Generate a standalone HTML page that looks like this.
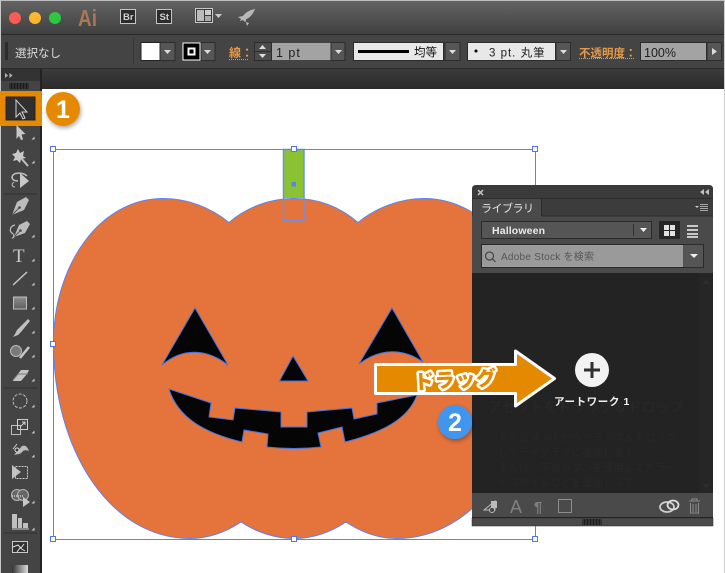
<!DOCTYPE html>
<html lang="ja"><head><meta charset="utf-8"><title>Illustrator</title>
<style>
html,body{margin:0;padding:0;background:#fff}
svg{display:block;position:absolute;left:0;top:0}
text{font-family:"Liberation Sans","Noto Sans CJK JP",sans-serif}
</style></head><body>
<svg width="725" height="573" viewBox="0 0 725 573" xmlns="http://www.w3.org/2000/svg">
<defs>
<linearGradient id="tb" x1="0" y1="0" x2="0" y2="1"><stop offset="0" stop-color="#636363"/><stop offset="1" stop-color="#404040"/></linearGradient>
<linearGradient id="db" x1="0" y1="0" x2="0" y2="1"><stop offset="0" stop-color="#3b3b3b"/><stop offset="1" stop-color="#2b2b2b"/></linearGradient>
<linearGradient id="ic" x1="0" y1="0" x2="0" y2="1"><stop offset="0" stop-color="#8e8e8e"/><stop offset="1" stop-color="#5f5f5f"/></linearGradient>
<linearGradient id="grd" x1="0" y1="0" x2="1" y2="0"><stop offset="0" stop-color="#333"/><stop offset="1" stop-color="#ddd"/></linearGradient>
<filter id="sh" x="-30%" y="-30%" width="170%" height="170%"><feDropShadow dx="1" dy="2" stdDeviation="2" flood-color="#000" flood-opacity=".35"/></filter>
</defs>
<rect width="725" height="573" fill="#fff"/>
<!-- title bar -->
<rect x="1" y="1" width="723" height="33" fill="url(#tb)"/>
<rect x="0" y="0" width="725" height="1" fill="#bdbdbd"/>
<rect x="0" y="0" width="1" height="573" fill="#c8c8c8"/>
<rect x="724" y="0" width="1" height="573" fill="#d0d0d0"/>
<circle cx="15" cy="18" r="6" fill="#f95c57"/><circle cx="35" cy="18" r="6" fill="#fdb62f"/><circle cx="55" cy="18" r="6" fill="#2bc840"/>
<text x="78" y="26" font-size="23" font-weight="700" fill="#a97856" textLength="19" lengthAdjust="spacingAndGlyphs">Ai</text>
<rect x="120.500" y="9.500" width="15" height="14" fill="#2c2c2c" stroke="#c4c4c4"/>
<text x="123" y="20" font-size="9.500" font-weight="700" fill="#d0d0d0">Br</text>
<rect x="156.500" y="9.500" width="15" height="14" fill="#2c2c2c" stroke="#c4c4c4"/>
<text x="159.500" y="20" font-size="9.500" font-weight="700" fill="#d0d0d0">St</text>
<rect x="195.500" y="8.500" width="17" height="14" fill="#3a3a3a" stroke="#c8c8c8"/>
<rect x="197" y="10" width="7" height="11" fill="#bbb"/><rect x="205" y="10" width="6" height="5" fill="#ccc"/><rect x="205" y="16" width="6" height="5" fill="#aaa"/>
<path d="M215 14h7l-3.500 4z" fill="#c8c8c8"/>
<path d="M255 9c-6 1-10 4-12 7l-5 1 3 2-1 2 3-1 2 2c1 0 1-2 1-3 3 0 7-5 9-10z M246 22l1 4 2-3z" fill="#b8b8b8"/>
<!-- control bar -->
<rect x="1" y="34" width="723" height="1" fill="#2a2a2a"/>
<rect x="1" y="35" width="723" height="33" fill="#444"/>
<rect x="1" y="68" width="723" height="1" fill="#2a2a2a"/>
<path d="M5 43h3M5 45h3M5 47h3M5 49h3M5 51h3M5 53h3M5 55h3M5 57h3M5 59h3" stroke="#151515"/>
<text x="15" y="57" font-size="11.500" fill="#dcdcdc">選択なし</text>
<rect x="133" y="38" width="1" height="26" fill="#363636"/>
<rect x="141" y="42.500" width="19" height="18" fill="#fff" stroke="#222"/>
<rect x="160" y="42.500" width="15" height="18" fill="#565656" stroke="#2c2c2c"/>
<path d="M164 50h7l-3.500 4z" fill="#ddd"/>
<rect x="183" y="43" width="17" height="17" fill="#000" stroke="#fff"/>
<rect x="188.500" y="48.500" width="6" height="6" fill="none" stroke="#fff" stroke-width="2"/>
<rect x="201" y="42.500" width="14" height="18" fill="#565656" stroke="#2c2c2c"/>
<path d="M204 50h7l-3.500 4z" fill="#ddd"/>
<text x="229" y="57" font-size="12" font-weight="700" fill="#e59a48">線：</text>
<path d="M229 59.500h19" stroke="#e59a48" stroke-dasharray="1 1"/>
<rect x="254.500" y="42.500" width="17" height="18" fill="#4c4c4c" stroke="#2c2c2c"/>
<path d="M254 51.500h17" stroke="#2c2c2c"/>
<path d="M259 49l3.500-4 3.500 4z M259 54h7l-3.500 4z" fill="#ddd"/>
<rect x="272" y="43" width="59" height="17" fill="#a3a3a3"/>
<text x="276" y="57" font-size="12.500" fill="#1f1f1f" letter-spacing="1">1 pt</text>
<rect x="331" y="42.500" width="14" height="18" fill="#565656" stroke="#2c2c2c"/>
<path d="M335 50h7l-3.500 4z" fill="#ddd"/>
<rect x="353.500" y="42.500" width="90" height="18" fill="#e8e8e8" stroke="#2c2c2c"/>
<rect x="358" y="50" width="51" height="3" fill="#000"/>
<text x="414" y="56" font-size="11.500" fill="#111">均等</text>
<rect x="445" y="42.500" width="15" height="18" fill="#565656" stroke="#2c2c2c"/>
<path d="M449 50h7l-3.500 4z" fill="#ddd"/>
<rect x="467.500" y="42.500" width="88" height="18" fill="#e8e8e8" stroke="#2c2c2c"/>
<circle cx="476" cy="51" r="1.500" fill="#000"/>
<text x="489" y="56.500" font-size="11.500" fill="#222" letter-spacing="1">3 pt. 丸筆</text>
<rect x="556" y="42.500" width="14.500" height="18" fill="#565656" stroke="#2c2c2c"/>
<path d="M560 50h7l-3.500 4z" fill="#ddd"/>
<text x="579" y="57" font-size="11.500" font-weight="700" fill="#e59a48">不透明度：</text>
<path d="M579 58.500h55" stroke="#e59a48" stroke-dasharray="1 1"/>
<rect x="640.500" y="42.500" width="66" height="18" fill="#a3a3a3" stroke="#2c2c2c"/>
<text x="644" y="57" font-size="12.500" fill="#1f1f1f">100%</text>
<rect x="707" y="42.500" width="14.500" height="18" fill="#565656" stroke="#2c2c2c"/>
<path d="M712 48v7l5-3.500z" fill="#ddd"/>
<!-- dark bar -->
<rect x="42" y="69" width="682" height="20" fill="url(#db)"/>
<!-- toolbar -->
<rect x="1" y="69" width="39" height="504" fill="#444"/>
<rect x="1" y="69" width="39" height="12" fill="#333"/>
<rect x="40" y="69" width="2" height="504" fill="#222"/>
<path d="M5 73v5l3-2.500z M9.500 73v5l3-2.500z" fill="#b5b5b5"/>
<path d="M10 83v6M11.500 83v6M13 83v6M14.500 83v6M16 83v6M17.500 83v6M19 83v6M20.500 83v6M22 83v6M23.500 83v6M25 83v6M26.500 83v6M28 83v6" stroke="#111" stroke-width=".8"/>
<path d="M4 194h33M4 388h33M4 533h33" stroke="#2f2f2f"/>
<!-- artboard -->
<path d="M229 222.500C210 207 187 198.500 163 198.500C100 198.500 53.500 265 53.500 343C53.500 450 110 538.500 190 538.500C209 538.500 226 532 241 522C256 532 275 538.500 294 538.500C313 538.500 331 532 346 522C361 532 378 538.500 397 538.500C477 538.500 535.500 450 535.500 343C535.500 265 488 198.500 424 198.500C401 198.500 377 207 358 222.500C340 207 318 198.500 294 198.500C270 198.500 247 207 229 222.500Z" fill="#e4743c" stroke="#5b82f0"/>
<rect x="283" y="149" width="21" height="49" fill="#8ac234"/>
<rect x="283.500" y="149.500" width="20.500" height="71" fill="none" stroke="#6f8fe6" stroke-width="1.500"/>
<rect x="291.500" y="182" width="4.500" height="4.500" fill="#5b82f0"/>
<path d="M195 308L228 365C206 348 182 348 162 365Z M392 308L423 362C403 348 380 348 359 364Z M293 356L308 381H279.500Z" fill="#050505" stroke="#3f74e8"/>
<path d="M169 389L211 403L209 417L233 420L235 408L281 412L281 427L307 427L307 412L352 408L354 419L377 414L377 403L417 395C408 420 380 433 345 442L342 427L318 433L321 447C303 449 285 449 267 447L268 434L244 430L242 442C205 433 178 418 169 389Z" fill="#050505" stroke="#3f74e8"/>
<rect x="53.500" y="149.500" width="482" height="390" fill="none" stroke="#5b82f0"/>
<g fill="#fff" stroke="#4f78ee"><rect x="50.500" y="146.500" width="5" height="5"/><rect x="291.500" y="146.500" width="5" height="5"/><rect x="532.500" y="146.500" width="5" height="5"/><rect x="50.500" y="341.500" width="5" height="5"/><rect x="50.500" y="536.500" width="5" height="5"/><rect x="291.500" y="536.500" width="5" height="5"/><rect x="532.500" y="536.500" width="5" height="5"/></g>
<!-- tools -->
<rect x="0" y="91" width="42" height="35" fill="#e58a00"/>
<rect x="6" y="97" width="29" height="23" fill="#2f2f2f" stroke="#222"/>
<path d="M16 100v17l4-4 3 6 2-1-3-6h5z" fill="#333" stroke="#d0d0d0"/>
<path d="M16.500 125l9 9-4 .5 1.500 5-2 .5-2-4-2.500 3z" fill="#c8c8c8"/>
<path d="M31.500 139.500h3v-3z M31.500 163.500h3v-3z M31.500 237.500h3v-3z M31.500 261.500h3v-3z M31.500 285.500h3v-3z M31.500 309.500h3v-3z M31.500 333.500h3v-3z M31.500 357.500h3v-3z M31.500 381.500h3v-3z M31.500 407.500h3v-3z M31.500 433.500h3v-3z M31.500 457.500h3v-3z M31.500 503.500h3v-3z M31.500 530.500h3v-3z" fill="#ccc"/>
<path d="M18 149l2 4 4-2-1 5 3 2-5 1-1 4-3-3-4 1 2-4-3-3 4-1z" fill="#c8c8c8"/>
<path d="M21 158l7 8" stroke="#c0c0c0" stroke-width="2"/>
<path d="M27 176c-4-4-14-4-15 1 0 3 3 4 6 4" fill="none" stroke="#c0c0c0" stroke-width="1.500"/>
<path d="M14 182c-3 2-2 5 1 5" fill="none" stroke="#c0c0c0"/>
<path d="M20 173l9 8-9 7z" fill="#c8c8c8"/>
<path d="M29 200l-3-3-9 5-5 13 12-5z" fill="#bcbcbc"/><path d="M12 215l7-7" stroke="#555"/><circle cx="19.500" cy="207.500" r="1.300" fill="#444"/>
<path d="M30 224l-3-3-8 4-5 12 11-4z" fill="#bcbcbc"/><path d="M14 237l6-6" stroke="#555"/><circle cx="20.500" cy="230.500" r="1.300" fill="#444"/>
<path d="M15 225c-5 1-6 6-3 8 3 2 2 5 0 5" fill="none" stroke="#bcbcbc" stroke-width="1.200"/>
<text x="13" y="262" font-family="Liberation Serif" font-size="19" fill="#c8c8c8" style="font-family:'Liberation Serif',serif">T</text>
<path d="M13 285l14-13" stroke="#c8c8c8" stroke-width="1.500"/>
<rect x="13.500" y="297" width="13" height="12" fill="url(#ic)" stroke="#c0c0c0"/>
<path d="M28 319l-11 11-2 4-2 3 5-2 3-3 9-11z" fill="#c0c0c0"/>
<circle cx="16" cy="351" r="5.500" fill="#7a7a7a" stroke="#bbb"/><path d="M20 358l9-11" stroke="#c8c8c8" stroke-width="2.500"/>
<path d="M13 380l8-10 8 0-2 4-6 7-8 0z" fill="#c4c4c4"/><path d="M13 380l5-6h10" fill="none" stroke="#777"/>
<circle cx="20" cy="401" r="7" fill="none" stroke="#bdbdbd" stroke-dasharray="3 1.500"/>
<rect x="11.500" y="425.500" width="9" height="9" fill="none" stroke="#bdbdbd"/><rect x="17.500" y="419.500" width="10" height="10" fill="none" stroke="#d0d0d0"/><path d="M20 427l5-5M22 422h3v3" stroke="#d0d0d0" fill="none"/>
<path d="M14 455l8-9c3-1 5 0 7 5-3-1-4-1-6 0-2 3-4 3-9 4z" fill="#bcbcbc"/><path d="M13 449l4-5" stroke="#ccc"/><circle cx="17" cy="450" r="2" fill="#333" stroke="#ddd"/>
<path d="M12 465l9 7-9 7z" fill="#c0c0c0"/><rect x="15.500" y="466.500" width="12" height="12" fill="none" stroke="#ccc" stroke-dasharray="2 1"/>
<circle cx="17" cy="495" r="5.500" fill="#666" stroke="#b5b5b5"/><circle cx="23" cy="495" r="5.500" fill="#666" stroke="#b5b5b5"/><path d="M12 496h11" stroke="#fff" stroke-dasharray="1 1"/><path d="M23 497l7 5-7 5z" fill="#c8c8c8"/>
<path d="M12 514h5v14h-5z M18 518h4v10h-4z M23 523h5v5h-5z" fill="#c0c0c0"/><path d="M12 529h17" stroke="#ccc"/>
<rect x="12.500" y="541.500" width="15" height="11" fill="#333" stroke="#c8c8c8"/><path d="M13 547l5-2 3 3 3-4M17 552l3-4 5 3" stroke="#ddd" fill="none"/>
<rect x="12" y="565" width="16" height="8" fill="url(#grd)"/>
<!-- badge 1 -->
<circle cx="63" cy="109" r="17" fill="#e58a00" filter="url(#sh)"/>
<text x="63" y="118" font-size="25" font-weight="700" fill="#fff" text-anchor="middle">1</text>
<!-- panel -->
<path d="M472 189q0-4 4-4h233q4 0 4 4v337h-241z" fill="#3b3b3b"/>
<rect x="472" y="198" width="241" height="75" fill="#4a4a4a"/>
<rect x="472" y="198" width="241" height="1" fill="#2d2d2d"/>
<rect x="472" y="199" width="241" height="17" fill="#3c3c3c"/>
<rect x="473" y="199" width="69" height="17" fill="#4a4a4a"/>
<path d="M541.500 199v17" stroke="#2a2a2a"/><rect x="542" y="215.500" width="171" height="1" fill="#2c2c2c"/>
<path d="M478 190l5 5M483 190l-5 5" stroke="#c8c8c8" stroke-width="1.500"/>
<path d="M704 189v6l-4-3z M709 189v6l-4-3z" fill="#c0c0c0"/>
<text x="481" y="212" font-size="11" fill="#e4e4e4" textLength="53">ライブラリ</text>
<path d="M695 206h4l-2 2z" fill="#ccc"/><path d="M700 204.500h8M700 206.500h8M700 208.500h8M700 210.500h8" stroke="#ccc" stroke-width=".8"/>
<rect x="481.500" y="221.500" width="170" height="17" fill="#555" stroke="#2a2a2a"/>
<path d="M633.500 224v12" stroke="#333"/>
<path d="M640 228h7l-3.500 4z" fill="#eee"/>
<text x="492" y="234" font-size="10.500" font-weight="700" fill="#eaeaea" textLength="53">Halloween</text>
<rect x="659" y="221" width="21" height="18" fill="#262626"/>
<path d="M664 225h5v5h-5z M670 225h5v5h-5z M664 231h5v5h-5z M670 231h5v5h-5z" fill="#e2e2e2"/>
<path d="M687 225h11v2h-11z M687 229h11v2h-11z M687 233h11v2h-11z M687 236h11v2h-11z" fill="#c8c8c8"/>
<rect x="481.500" y="244.500" width="222" height="23" fill="#555" stroke="#2a2a2a"/>
<rect x="482" y="245" width="201" height="22" fill="#9a9a9a"/>
<circle cx="489.500" cy="256" r="4" fill="none" stroke="#444" stroke-width="1.200"/><path d="M492.500 259l3 3" stroke="#444" stroke-width="1.200"/>
<text x="501" y="260" font-size="10" fill="#565656" textLength="93">Adobe Stock を検索</text>
<path d="M690 254h8l-4 4z" fill="#eee"/>
<rect x="472" y="273" width="241" height="220" fill="#232323"/>
<rect x="699" y="273" width="14" height="220" fill="#262626"/>
<path d="M706 279l4 5h-8z M702 484h8l-4 5z" fill="#2d2d2d"/>
<text x="488" y="412" font-size="13.500" fill="#292929" letter-spacing=".5">アセットをドラッグ＆ドロップ</text>
<g font-size="10.500" fill="#282828"><text x="498" y="441">ドキュメントからドラッグ＆ドロップ</text><text x="498" y="456">してライブラリに追加します</text><text x="498" y="471">または、下のボタンを使用してカラー</text><text x="498" y="486">やスタイルなどを追加します</text></g>
<rect x="472" y="493" width="241" height="24" fill="#4a4a4a"/>
<rect x="472" y="517" width="241" height="1" fill="#222"/>
<rect x="472" y="518" width="241" height="8" fill="#4a4a4a" stroke="#2a2a2a" stroke-width=".5"/>
<path d="M583 519v6M584.500 519v6M586 519v6M587.500 519v6M589 519v6M590.500 519v6M592 519v6M593.500 519v6M595 519v6M596.500 519v6M598 519v6M599.500 519v6M601 519v6" stroke="#111" stroke-width=".8"/>
<path d="M484 510l11-9v9zM484 510h11" fill="none" stroke="#bdbdbd"/><rect x="491" y="501" width="6" height="7" fill="#bbb"/><circle cx="492" cy="510" r="2.500" fill="#444" stroke="#bbb"/>
<text x="510" y="513" font-size="18" fill="#808080">A</text>
<text x="534" y="512" font-size="15" font-weight="700" fill="#808080">¶</text>
<rect x="558.500" y="499.500" width="13" height="13" fill="none" stroke="#8e8e8e"/>
<ellipse cx="667" cy="507" rx="7" ry="5" fill="none" stroke="#ccc" stroke-width="1.800"/><ellipse cx="673" cy="505" rx="5.500" ry="4.500" fill="none" stroke="#ddd" stroke-width="1.800"/>
<path d="M689 501h11M692 501v-2h5v2M690.500 503v10h8v-10M693 504v8M696 504v8" fill="none" stroke="#8a8a8a"/>
<!-- plus -->
<circle cx="592" cy="370" r="17" fill="#f2f2f2"/>
<path d="M584 370h16M592 362v16" stroke="#2f2f2f" stroke-width="3"/>
<text x="554" y="405" font-size="10.500" font-weight="700" fill="#f0f0f0" letter-spacing=".6">アートワーク 1</text>
<!-- badge 2 -->
<circle cx="455" cy="422" r="17" fill="#4096ee" filter="url(#sh)"/>
<text x="455" y="431" font-size="25" font-weight="700" fill="#fff" text-anchor="middle">2</text>
<!-- arrow -->
<path d="M375.500 364.500H515.500V351L554.500 378.500L515.500 406V393.500H375.500Z" fill="#e58a00" stroke="#fff" stroke-width="3" stroke-linejoin="round"/>
<text x="414" y="387" font-size="20" font-weight="900" fill="#e58a00" stroke="#fff" stroke-width="5" paint-order="stroke" stroke-linejoin="round" transform="rotate(-3 455 380)" textLength="82">ドラッグ</text>
</svg>
</body></html>
